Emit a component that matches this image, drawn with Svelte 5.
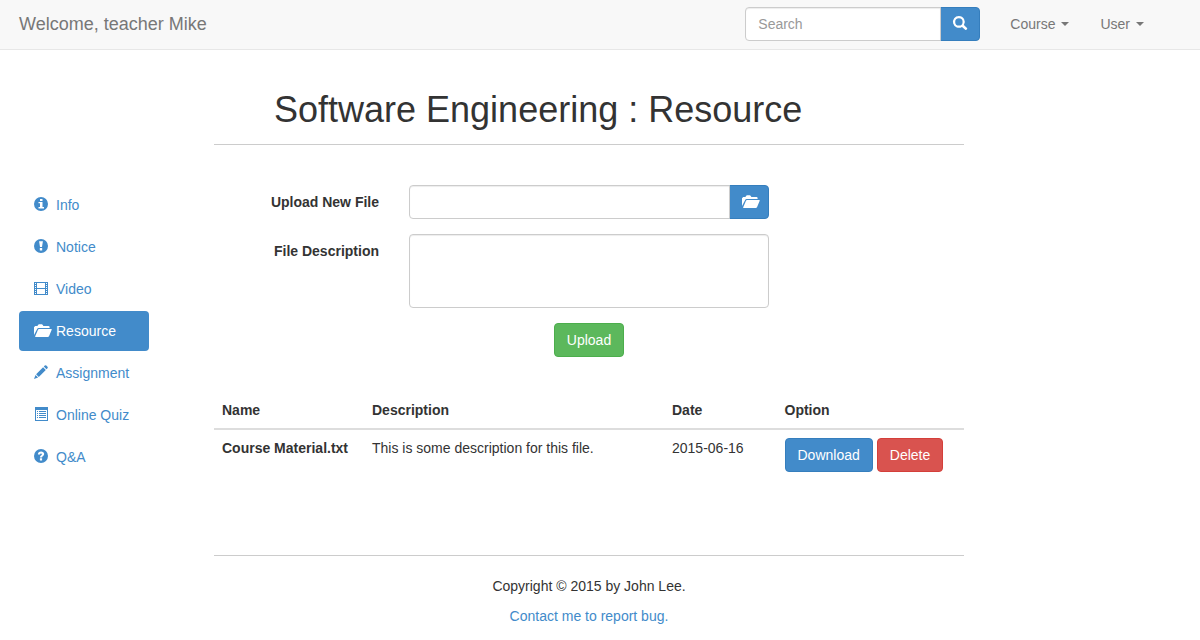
<script>
  const links = [
    { icon: 'info', label: 'Info' },
    { icon: 'notice', label: 'Notice' },
    { icon: 'film', label: 'Video' },
    { icon: 'folder', label: 'Resource', active: true },
    { icon: 'pencil', label: 'Assignment' },
    { icon: 'list', label: 'Online Quiz' },
    { icon: 'question', label: 'Q&A' }
  ];
  const files = [
    { name: 'Course Material.txt', description: 'This is some description for this file.', date: '2015-06-16' }
  ];
</script>

{#snippet glyph(name)}
  <svg class="icon" viewBox="0 0 14 14" fill="currentColor" aria-hidden="true">
    {#if name === 'info'}
      <path fill-rule="evenodd" d="M7 0a7 7 0 1 1 0 14A7 7 0 0 1 7 0ZM6 2V4H8.5V2ZM4.5 5V6.2H6V10H4.5V11.5H10V10H8.5V5Z" />
    {:else if name === 'notice'}
      <path fill-rule="evenodd" d="M7 0a7 7 0 1 1 0 14A7 7 0 0 1 7 0ZM5.1 2.2L6 8H8L8.9 2.2ZM5.8 9V11.4H8.2V9Z" />
    {:else if name === 'question'}
      <path fill-rule="evenodd" d="M7 0a7 7 0 1 1 0 14A7 7 0 0 1 7 0ZM3.9 5.6H6.1C6.1 4.8 6.4 4.4 7 4.4C7.6 4.4 7.9 4.7 7.9 5.2C7.9 6.2 5.9 6.3 5.9 8.4H8.1C8.1 7.2 10.2 6.9 10.2 5.1C10.2 3.4 8.8 2.4 7.1 2.4C5.2 2.4 3.9 3.6 3.9 5.6ZM5.9 9.2V11.5H8.1V9.2Z" />
    {:else if name === 'film'}
      <path fill-rule="evenodd" d="M0 1H14V14H0ZM1 2V3H2V2ZM1 4V5H2V4ZM1 6V7H2V6ZM1 8V9H2V8ZM1 10V11H2V10ZM1 12V13H2V12ZM12 2V3H13V2ZM12 4V5H13V4ZM12 6V7H13V6ZM12 8V9H13V8ZM12 10V11H13V10ZM12 12V13H13V12ZM3 2V7H11V2ZM3 8V13H11V8Z" />
    {:else if name === 'folder'}
      <path d="M0 12V4.2L1.2 3H3.4L4.2 1.7Q4.4 1.3 5 1.3H7.8Q8.4 1.3 8.6 1.7L9.4 3H14.5Q15.6 3 15.6 4.2V5H4.5Q3.7 5 3.3 5.8Z" />
      <path d="M5 6H17.2Q18.1 6 17.7 6.8L15 13.2Q14.6 14 13.8 14H1.6Q.8 14 1.2 13.2L4 6.7Q4.3 6 5 6Z" />
    {:else if name === 'pencil'}
      <path d="M10.8 .5Q11.6-.2 12.3 .5L13.5 1.7Q14.2 2.4 13.5 3.2L12.5 4.2L9.8 1.5ZM9.1 2.2L11.8 4.9L4.8 11.9L2.1 9.2ZM1.5 9.9L4.1 12.5L0 14Z" />
    {:else if name === 'list'}
      <path fill-rule="evenodd" d="M1 0H14V14H1ZM2 3V13H13V3ZM3 4H4V5H3ZM5 4H12V5H5ZM3 6H4V7H3ZM5 6H12V7H5ZM3 8H4V9H3ZM5 8H12V9H5ZM3 10H4V11H3ZM5 10H12V11H5Z" />
    {:else if name === 'search'}
      <path fill-rule="evenodd" d="M5.9 0a5.9 5.9 0 0 1 5 9L14 12.1Q14.5 12.6 14 13.1L13.2 13.9Q12.7 14.3 12.2 13.8L9 10.9A5.9 5.9 0 1 1 5.9 0ZM5.9 2.2a3.7 3.7 0 1 0 0 7.4A3.7 3.7 0 0 0 5.9 2.2Z" />
    {/if}
  </svg>
{/snippet}

<header class="navbar">
  <a class="brand" href="#home">Welcome, teacher Mike</a>
  <form class="input-group search" role="search">
    <input class="control" type="text" placeholder="Search" aria-label="Search" />
    <button class="btn primary" type="button" aria-label="Submit search">{@render glyph('search')}</button>
  </form>
  <nav class="menus">
    <a href="#course">Course <span class="caret"></span></a>
    <a href="#user">User <span class="caret"></span></a>
  </nav>
</header>

<div class="page">
  <nav class="sidebar">
    {#each links as link}
      <a href={'#' + link.icon} class:active={link.active}>{@render glyph(link.icon)}{link.label}</a>
    {/each}
  </nav>

  <main>
    <h1>Software Engineering : Resource</h1>
    <form class="upload">
      <label for="file">Upload New File</label>
      <div class="input-group">
        <input class="control" id="file" type="text" />
        <button class="btn primary" type="button" aria-label="Browse">{@render glyph('folder')}</button>
      </div>
      <label for="description">File Description</label>
      <textarea class="control" id="description" rows="3"></textarea>
      <div class="submit"><button class="btn success" type="button">Upload</button></div>
    </form>

    <table>
      <thead>
        <tr><th class="name">Name</th><th class="description">Description</th><th class="date">Date</th><th>Option</th></tr>
      </thead>
      <tbody>
        {#each files as file}
          <tr>
            <th scope="row">{file.name}</th>
            <td>{file.description}</td>
            <td>{file.date}</td>
            <td>
              <div class="options">
                <button class="btn primary" type="button">Download</button>
                <button class="btn danger" type="button">Delete</button>
              </div>
            </td>
          </tr>
        {/each}
      </tbody>
    </table>

    <footer>
      <p>Copyright © 2015 by John Lee.</p>
      <p><a href="#contact">Contact me to report bug.</a></p>
    </footer>
  </main>
</div>

<style>
  :global(body) {
    margin: 0;
    background: #fff;
    color: #333;
    font-family: "Liberation Sans", Arial, sans-serif;
    font-size: 14px;
    line-height: 20px;
  }
  .navbar, .navbar *, .page, .page * { box-sizing: border-box; }
  a { color: #428bca; text-decoration: none; }

  .navbar {
    display: flex;
    align-items: center;
    height: 50px;
    padding: 0 41px 2px 19px;
    background: #f8f8f8;
    border-bottom: 1px solid #e7e7e7;
  }
  .brand { margin-right: auto; color: #777; font-size: 18px; }
  .search { width: 235px; margin-right: 15px; }
  .menus { display: flex; }
  .menus a { display: flex; align-items: center; gap: 6px; padding: 14px 15px; color: #777; }
  .menus a + a { margin-left: 1px; }
  .caret { border: 4px solid transparent; border-top-color: currentColor; border-bottom: 0; }

  .icon { display: block; flex: none; width: 14px; height: 14px; margin-bottom: 2px; overflow: visible; }

  .control {
    display: block;
    width: 100%;
    height: 34px;
    margin: 0;
    padding: 6px 12px;
    border: 1px solid #ccc;
    border-radius: 4px;
    background: #fff;
    box-shadow: inset 0 1px 1px rgba(0, 0, 0, 0.075);
    color: #555;
    font: inherit;
  }
  .control::placeholder { color: #999; opacity: 1; }
  textarea.control { height: auto; resize: none; overflow: auto; }
  .input-group { display: flex; }
  .input-group .control { position: relative; z-index: 1; flex: 1; min-width: 0; border-radius: 4px 0 0 4px; }
  .input-group .btn { width: 40px; margin-left: -1px; border-radius: 0 4px 4px 0; }

  .btn {
    display: inline-block;
    height: 34px;
    padding: 6px 12px;
    border: 1px solid;
    border-radius: 4px;
    color: #fff;
    font: inherit;
    cursor: pointer;
  }
  .primary { background: #428bca; border-color: #357ebd; }
  .success { background: #5cb85c; border-color: #4cae4c; }
  .danger { background: #d9534f; border-color: #d43f3a; }

  .page {
    display: grid;
    grid-template-columns: 2fr 8fr 2fr;
    padding: 0 26px 14px 4px;
  }
  .sidebar { display: flex; flex-direction: column; gap: 2px; padding: 135px 50px 0 15px; }
  .sidebar a { display: flex; align-items: center; gap: 8px; padding: 10px 15px; border-radius: 4px; white-space: nowrap; }
  .sidebar .active { background: #428bca; color: #fff; }

  main { padding: 40px 15px 0; }
  h1 {
    margin: 0 0 40px;
    padding: 0 0 14px 60px;
    border-bottom: 1px solid #ccc;
    font-size: 36px;
    font-weight: 400;
    line-height: 40px;
  }
  .upload {
    display: grid;
    grid-template-columns: 22% 48%;
    column-gap: 30px;
    row-gap: 15px;
    margin-bottom: 35px;
  }
  .upload label { padding-top: 7px; font-weight: 700; text-align: right; }
  .submit { grid-column: 2; }
  .submit .btn { display: block; margin: 0 auto; }

  table { width: 100%; border-collapse: separate; border-spacing: 0; table-layout: fixed; }
  th, td { padding: 8px; text-align: left; vertical-align: top; }
  thead th { border-bottom: 2px solid #ddd; }
  .name { width: 20%; }
  .description { width: 40%; }
  .date { width: 15%; }
  tbody th { white-space: nowrap; }
  .options { display: flex; gap: 4px; }

  footer { margin-top: 75px; padding-top: 20px; border-top: 1px solid #ccc; text-align: center; }
  footer p { margin: 0 0 10px; }
</style>
